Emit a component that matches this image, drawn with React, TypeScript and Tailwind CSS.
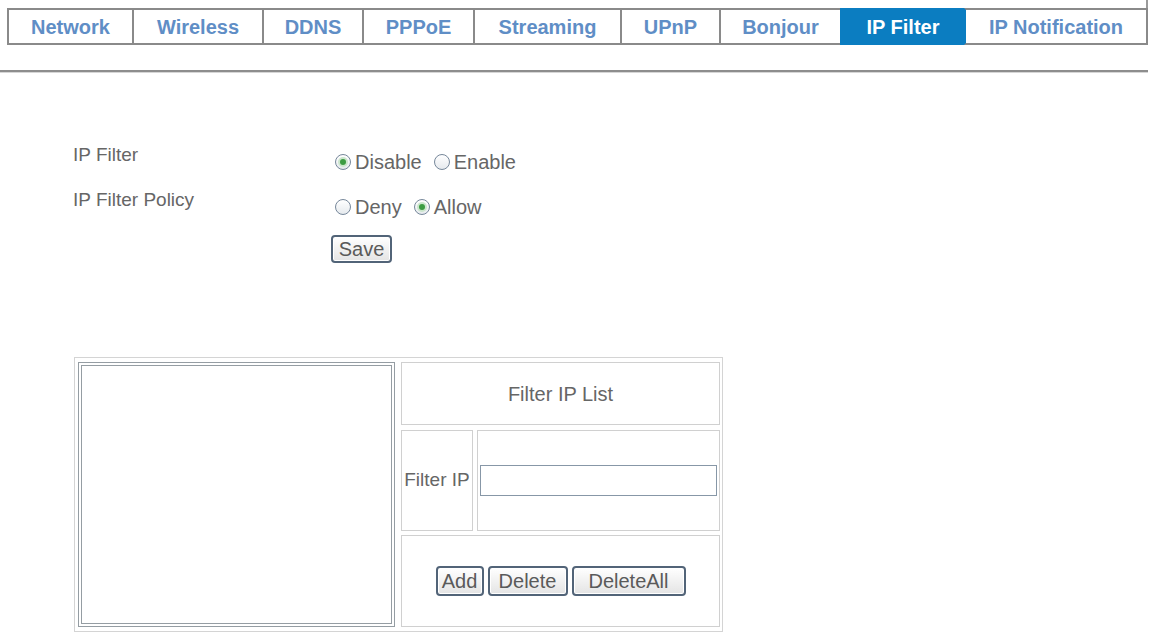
import React from "react";

const tabs: { label: string; w: string; active?: boolean; afterActive?: boolean; last?: boolean }[] = [
  { label: "Network", w: "w-[125px]" },
  { label: "Wireless", w: "w-[130px]" },
  { label: "DDNS", w: "w-[100px]" },
  { label: "PPPoE", w: "w-[111px]" },
  { label: "Streaming", w: "w-[147px]" },
  { label: "UPnP", w: "w-[99px]" },
  { label: "Bonjour", w: "w-[121px]" },
  { label: "IP Filter", w: "w-[124px]", active: true },
  { label: "IP Notification", w: "w-[184px]", afterActive: true, last: true },
];

function Radio({ checked }: { checked?: boolean }) {
  return (
    <span className="relative inline-flex h-[16px] w-[16px] shrink-0 items-center justify-center rounded-full border-[1.5px] border-[#76879a] bg-gradient-to-b from-[#ffffff] to-[#e6eaee]">
      {checked ? (
        <span className="h-[6px] w-[6px] rounded-full bg-[#3c9c42] shadow-[0_0_0_2px_#cbe6cc]" />
      ) : null}
    </span>
  );
}

function Btn({ children, w }: { children: React.ReactNode; w: string }) {
  return (
    <button
      type="button"
      className={`${w} h-[30px] rounded-[4px] border-2 border-[#526478] bg-gradient-to-b from-[#ffffff] to-[#e4e4e4] text-[20px] leading-none text-[#5a5a5a] shadow-[inset_0_0_0_1px_#ffffff]`}
    >
      {children}
    </button>
  );
}

export default function App() {
  return (
    <div
      className="min-h-[642px] w-[1151px] bg-white text-[#666666]"
      style={{ fontFamily: '"Liberation Sans", Arial, sans-serif' }}
    >
      <div className="h-[8px] w-[1148px] border-r-2 border-[#9a9a9a]" />
      <div className="ml-[7px] flex h-[37px]">
        {tabs.map((t) => (
          <div
            key={t.label}
            className={`${t.w} flex h-full items-center justify-center border-y-2 border-l-2 text-[20px] font-bold ${
              t.active
                ? "border-[#0b7dc1] bg-[#0b7dc1] text-white"
                : t.afterActive
                ? "border-[#8a8a8a] border-l-[#0b7dc1] text-[#5f8ec6]"
                : "border-[#8a8a8a] text-[#5f8ec6]"
            } ${t.last ? "border-r-2" : ""}`}
          >
            {t.label}
          </div>
        ))}
      </div>

      <div className="mt-[25px] h-[2px] w-[1148px] bg-[#8d8d8d]" />
      <div className="h-[1px] w-[1148px] bg-[#d6d6d6]" />

      <div className="ml-[73px] mt-[71px]">
        <div className="flex h-[45px] items-start">
          <div className="w-[258px] text-[19px] leading-[22px]">IP Filter</div>
          <div className="flex items-center pt-[7px] text-[20px] leading-[22px]">
            <span className="ml-[4px]" />
            <Radio checked />
            <span className="ml-[4px]">Disable</span>
            <span className="ml-[12px]" />
            <Radio />
            <span className="ml-[4px]">Enable</span>
          </div>
        </div>
        <div className="flex h-[45px] items-start">
          <div className="w-[258px] text-[19px] leading-[22px]">IP Filter Policy</div>
          <div className="flex items-center pt-[7px] text-[20px] leading-[22px]">
            <span className="ml-[4px]" />
            <Radio />
            <span className="ml-[4px]">Deny</span>
            <span className="ml-[12px]" />
            <Radio checked />
            <span className="ml-[4px]">Allow</span>
          </div>
        </div>
        <div className="flex">
          <div className="w-[258px]" />
          <button
            type="button"
            className="mt-[1px] h-[28px] w-[61px] rounded-[4px] border-2 border-[#526478] bg-gradient-to-b from-[#ffffff] to-[#e4e4e4] text-[20px] leading-none text-[#5a5a5a] shadow-[inset_0_0_0_1px_#ffffff]"
          >
            Save
          </button>
        </div>
      </div>

      <div className="ml-[74px] mt-[94px] flex h-[275px] w-[649px] border border-[#d4d4d4] pb-[4px] pl-[3px] pr-[2px] pt-[4px]">
        <div className="h-[265px] w-[317px] border-[4px] border-double border-[#959da3] bg-white" />
        <div className="ml-[6px] flex w-[319px] flex-col">
          <div className="flex h-[63px] items-center justify-center border border-[#d0d0d0] text-[20px]">
            Filter IP List
          </div>
          <div className="mt-[5px] flex h-[101px]">
            <div className="flex w-[72px] items-center justify-center whitespace-nowrap border border-[#d0d0d0] text-[19px]">
              Filter IP
            </div>
            <div className="ml-[4px] flex flex-1 items-center border border-[#d0d0d0] px-[2px]">
              <input
                type="text"
                className="h-[31px] w-full border-[1.5px] border-[#8797a7] bg-white outline-none"
              />
            </div>
          </div>
          <div className="mt-[4px] flex h-[92px] items-center justify-center gap-[4px] border border-[#d0d0d0]">
            <Btn w="w-[48px]">Add</Btn>
            <Btn w="w-[80px]">Delete</Btn>
            <Btn w="w-[114px]">DeleteAll</Btn>
          </div>
        </div>
      </div>
    </div>
  );
}
